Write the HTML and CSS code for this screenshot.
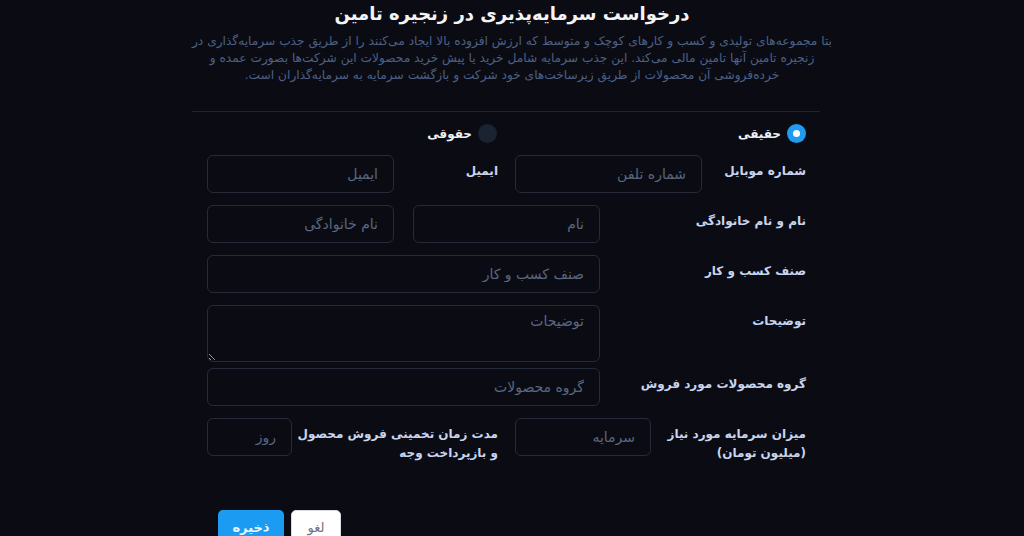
FILE: index.html
```html
<!DOCTYPE html>
<html lang="fa" dir="rtl">
<head>
<meta charset="utf-8">
<title>درخواست سرمایه‌پذیری در زنجیره تامین</title>
<link rel="stylesheet" href="styles.css">
</head>
<body>
<main class="page">
  <h1 class="title">درخواست سرمایه‌پذیری در زنجیره تامین</h1>
  <p class="intro">بتا مجموعه‌های تولیدی و کسب و کارهای کوچک و متوسط که ارزش افزوده بالا ایجاد می‌کنند را از طریق جذب سرمایه‌گذاری در<br>زنجیره تامین آنها تامین مالی می‌کند. این جذب سرمایه شامل خرید یا پیش خرید محصولات این شرکت‌ها بصورت عمده و<br>خرده‌فروشی آن محصولات از طریق زیرساخت‌های خود شرکت و بازگشت سرمایه به سرمایه‌گذاران است.</p>
  <form class="form">
    <hr class="rule">
    <div class="radios">
      <label class="radio radio-first"><span class="dot dot-on"></span><span class="radio-text">حقیقی</span></label>
      <label class="radio"><span class="dot"></span><span class="radio-text">حقوقی</span></label>
    </div>

    <div class="row row-a">
      <div class="lbl">شماره موبایل</div>
      <input class="field" type="text" placeholder="شماره تلفن">
      <div class="lbl lbl-inner">ایمیل</div>
      <input class="field" type="text" placeholder="ایمیل">
    </div>

    <div class="row row-b">
      <div class="lbl">نام و نام خانوادگی</div>
      <input class="field" type="text" placeholder="نام">
      <span></span>
      <input class="field" type="text" placeholder="نام خانوادگی">
    </div>

    <div class="row row-c">
      <div class="lbl">صنف کسب و کار</div>
      <input class="field" type="text" placeholder="صنف کسب و کار">
    </div>

    <div class="row row-c row-tight">
      <div class="lbl">توضیحات</div>
      <textarea class="field area" placeholder="توضیحات"></textarea>
    </div>

    <div class="row row-c">
      <div class="lbl">گروه محصولات مورد فروش</div>
      <input class="field" type="text" placeholder="گروه محصولات">
    </div>

    <div class="row row-d">
      <div class="lbl">میزان سرمایه مورد نیاز<br>(میلیون تومان)</div>
      <input class="field" type="text" placeholder="سرمایه">
      <div class="lbl lbl-inner">مدت زمان تخمینی فروش محصول<br>و بازپرداخت وجه</div>
      <input class="field" type="text" placeholder="روز">
    </div>

    <div class="actions">
      <button type="button" class="btn btn-save">ذخیره</button>
      <button type="button" class="btn btn-cancel">لغو</button>
    </div>
  </form>
</main>
</body>
</html>
```

FILE: styles.css
```css
* { box-sizing: border-box; }
html, body {
  margin: 0;
  padding: 0;
  background: #0b0c13;
  height: 100%;
  overflow: hidden;
}
body {
  font-family: "DejaVu Sans", "Noto Sans", sans-serif;
  color: #c9d5ec;
}
.page {
  width: 640px;
  margin: 0 auto;
  padding-top: 1px;
}
.title {
  margin: 0;
  text-align: center;
  font-size: 18px;
  line-height: 26px;
  font-weight: bold;
  color: #f3f4f7;
}
.intro {
  margin: 6px 0 0;
  text-align: center;
  font-size: 12.2px;
  line-height: 17px;
  color: #4d6086;
  white-space: nowrap;
}
.form {
  width: 628px;
  margin-left: 0;
  margin-right: 12px;
}
.rule {
  margin: 27px 0 0;
  border: 0;
  border-top: 1px solid #1e2431;
}
.radios {
  display: flex;
  align-items: center;
  height: 43px;
  padding-right: 14px;
}
.radio {
  display: flex;
  align-items: center;
  gap: 6px;
  font-size: 12px;
  font-weight: bold;
  color: #eef1f6;
}
.radio-first { width: 309px; }
.dot {
  width: 19px;
  height: 19px;
  border-radius: 50%;
  background: #1b2230;
  flex: none;
}
.dot-on {
  background: #1f9cf0;
  position: relative;
}
.dot-on::after {
  content: "";
  position: absolute;
  width: 7px;
  height: 7px;
  border-radius: 50%;
  background: #fff;
  top: 6px;
  left: 6px;
}
.row {
  display: grid;
  margin-bottom: 12px;
}
.row-tight { margin-bottom: 6px; }
.row-a { grid-template-columns: 118px 187px 121px 187px 15px; }
.row-b { grid-template-columns: 220px 187px 19px 187px 15px; }
.row-c { grid-template-columns: 220px 393px 15px; }
.row-d { grid-template-columns: 169px 136px 223px 85px 15px; }
.lbl {
  padding-top: 7px;
  padding-right: 14px;
  font-size: 12px;
  line-height: 19px;
  font-weight: bold;
  color: #c9d5ec;
  white-space: nowrap;
}
.lbl-inner { padding-right: 17px; }
.field {
  display: block;
  width: 100%;
  height: 38px;
  margin: 0;
  padding: 0 15px;
  background: transparent;
  border: 1px solid #252b38;
  border-radius: 6px;
  font-family: inherit;
  font-size: 14px;
  color: #c9d5ec;
  outline: none;
}
.field::placeholder { color: #5a6780; }
.area {
  height: 57px;
  padding-top: 7px;
  resize: vertical;
}
.actions {
  display: flex;
  direction: ltr;
  gap: 7px;
  margin-top: 47px;
  padding-left: 26px;
}
.btn {
  height: 40px;
  border: 0;
  border-radius: 5px;
  font-family: inherit;
  font-size: 13px;
  padding: 0 0 6px;
}
.btn-save {
  width: 66px;
  background: #1b9cf2;
  color: #e9f4ff;
  font-weight: bold;
}
.btn-cancel {
  width: 50px;
  background: #ffffff;
  color: #6b7283;
  border: 1px solid #d9dde3;
}
```
